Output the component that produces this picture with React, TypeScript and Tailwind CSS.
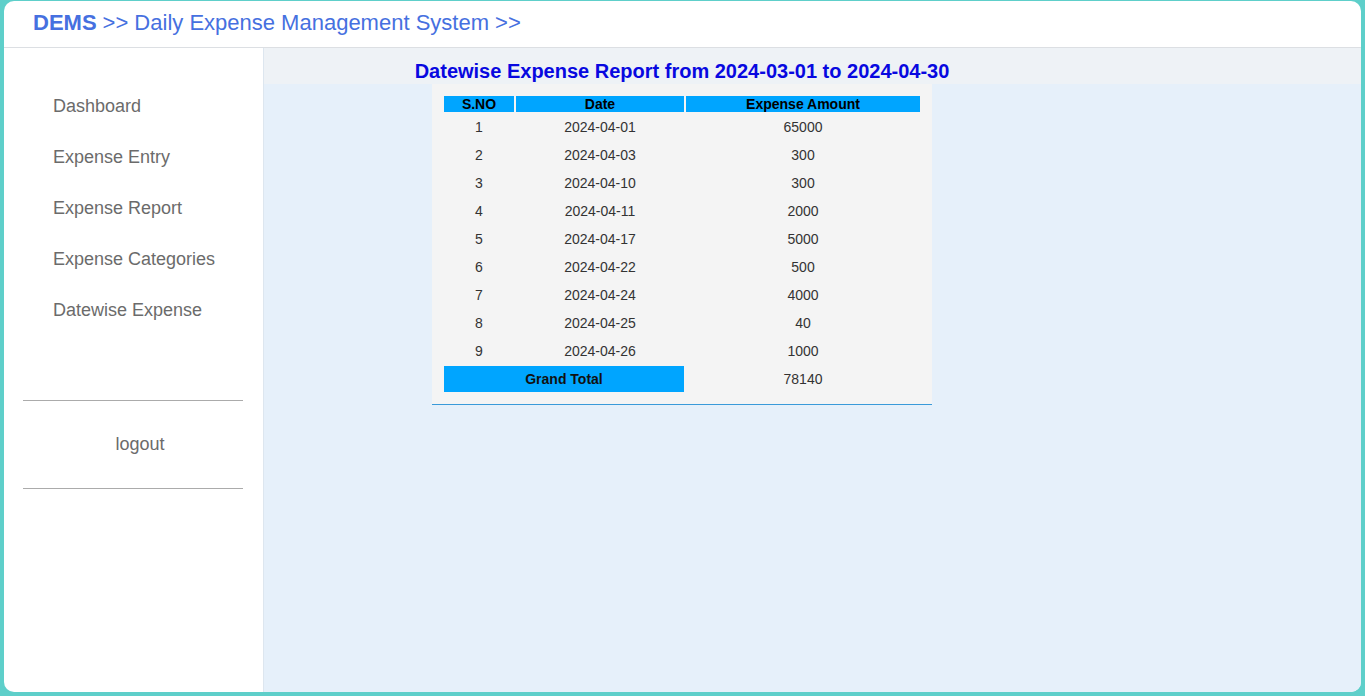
const rows = [
  { date: "2024-04-01", amount: 65000 },
  { date: "2024-04-03", amount: 300 },
  { date: "2024-04-10", amount: 300 },
  { date: "2024-04-11", amount: 2000 },
  { date: "2024-04-17", amount: 5000 },
  { date: "2024-04-22", amount: 500 },
  { date: "2024-04-24", amount: 4000 },
  { date: "2024-04-25", amount: 40 },
  { date: "2024-04-26", amount: 1000 },
];

const links = [
  "Dashboard",
  "Expense Entry",
  "Expense Report",
  "Expense Categories",
  "Datewise Expense",
];

export default function App() {
  const total = rows.reduce((s, r) => s + r.amount, 0);

  return (
    <div
      className="h-screen bg-[#5ecfca] pl-1 pr-1 pt-px pb-1"
      style={{ fontFamily: '"Liberation Sans", Arial, sans-serif' }}
    >
      <div className="h-full bg-white rounded-[10px] flex flex-col overflow-hidden">
        {/* Header */}
        <header className="h-[47px] shrink-0 flex items-center pb-[4px] px-[29px] border-b border-[#dcdfe3] text-[22px] text-[#4670e0]">
          <span className="font-bold">DEMS</span>
          <span className="ml-[6px]">&gt;&gt; Daily Expense Management System &gt;&gt;</span>
        </header>

        <div className="flex flex-1 min-h-0">
          {/* Sidebar */}
          <aside className="w-[260px] shrink-0 border-r border-[#dde6ef] pt-[33px] pl-[19px] pr-[20px]">
            <nav className="flex flex-col">
              {links.map((l) => (
                <a
                  key={l}
                  href="#"
                  className="h-[51px] flex items-center pl-[30px] text-[18px] text-[#6b6b6b]"
                >
                  {l}
                </a>
              ))}
            </nav>
            <div className="mt-[64px] border-t border-[#ababab]" />
            <div className="h-[87px] flex items-center justify-center pl-[14px] text-[18px] text-[#6b6b6b]">
              logout
            </div>
            <div className="border-t border-[#ababab]" />
          </aside>

          {/* Main */}
          <main className="flex-1 bg-[#e6f0fa]">
            <div className="h-[36px] bg-[#eef2f6]">
              <div className="w-[534px] ml-[151px] h-full flex items-end justify-center pb-[1px]">
                <h2 className="text-[20px] leading-[24px] font-bold text-[#0808e0] whitespace-nowrap">
                  Datewise Expense Report from 2024-03-01 to 2024-04-30
                </h2>
              </div>
            </div>
            <div className="ml-[168px] w-[500px] bg-[#f4f4f4] border-b border-[#3a9ad9] px-3 pt-3 pb-3">
              <div className="grid grid-cols-[70px_168px_234px] gap-x-[2px]">
                <div className="h-4 bg-[#00a5ff] flex items-center justify-center text-[14px] font-bold text-black">S.NO</div>
                <div className="h-4 bg-[#00a5ff] flex items-center justify-center text-[14px] font-bold text-black">Date</div>
                <div className="h-4 bg-[#00a5ff] flex items-center justify-center text-[14px] font-bold text-black">Expense Amount</div>
                <div className="col-span-3 h-px" />
                {rows.map((r, i) => (
                  <div key={r.date} className="contents">
                    <div className="h-[28px] flex items-center justify-center text-[14px] text-[#333]">{i + 1}</div>
                    <div className="h-[28px] flex items-center justify-center text-[14px] text-[#333]">{r.date}</div>
                    <div className="h-[28px] flex items-center justify-center text-[14px] text-[#333]">{r.amount}</div>
                  </div>
                ))}
                <div className="col-span-2 mt-px h-[26px] bg-[#00a5ff] flex items-center justify-center text-[14px] font-bold text-[#111]">
                  Grand Total
                </div>
                <div className="mt-px h-[26px] flex items-center justify-center text-[14px] text-[#333]">{total}</div>
              </div>
            </div>
          </main>
        </div>
      </div>
    </div>
  );
}
